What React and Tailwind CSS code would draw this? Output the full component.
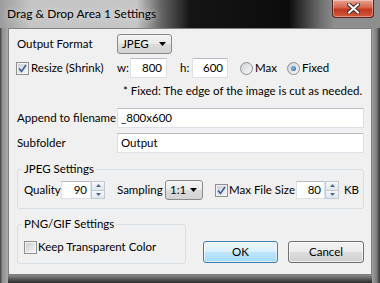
import React from "react";

const font = { fontFamily: 'Lato, "Noto Sans", sans-serif' };

const Check = ({ checked }) => (
  <span className="flex h-[13px] w-[13px] shrink-0 items-center justify-center border border-[#8e8f8f] bg-white">
    <span className="flex h-[11px] w-[11px] items-center justify-center border border-[#f4f4f4] bg-[linear-gradient(135deg,#cdd0d5,#f4f4f4)]">
      {checked ? (
        <svg width="9" height="9" viewBox="0 0 9 9">
          <path d="M1 4.5 L3.5 7.5 L8 1" fill="none" stroke="#3d5c9c" strokeWidth="1.6" />
        </svg>
      ) : null}
    </span>
  </span>
);

const Radio = ({ on }) => (
  <span className="flex h-[13px] w-[13px] shrink-0 items-center justify-center rounded-full border border-[#8e8f8f] bg-[linear-gradient(135deg,#cfd2d6,#f8f8f8)]">
    {on ? (
      <span className="h-[5px] w-[5px] rounded-full bg-[radial-gradient(circle_at_40%_40%,#8ec1f2,#1d4e97)]" />
    ) : null}
  </span>
);

const Arrow = () => (
  <svg width="7" height="4" viewBox="0 0 7 4">
    <path d="M0 0 H7 L3.5 4 Z" fill="#000" />
  </svg>
);

const Combo = ({ value, w }) => (
  <div
    className={`flex h-[20px] shrink-0 items-center justify-between rounded-[3px] border border-[#8a8a8a] bg-[linear-gradient(#f4f4f4,#e9e9e9_50%,#dcdcdc_51%,#d2d2d2)] pl-[4px] pr-[5px] ${w}`}
  >
    <span>{value}</span>
    <Arrow />
  </div>
);

const Spin = ({ value, w }) => (
  <div className="flex h-[18px] shrink-0 items-stretch">
    <div
      className={`flex items-center justify-end border border-[#dde1e7] border-t-[#b9bdc6] bg-white pr-[3px] ${w}`}
    >
      {value}
    </div>
    <div className="flex w-[14px] flex-col">
      <div className="flex flex-1 items-center justify-center border border-[#c3c9d2] bg-[linear-gradient(#f6f8fb,#dde5ee)]">
        <svg width="5" height="3" viewBox="0 0 5 3">
          <path d="M0 3 L2.5 0 L5 3 Z" fill="#51648a" />
        </svg>
      </div>
      <div className="flex flex-1 items-center justify-center border border-t-0 border-[#c3c9d2] bg-[linear-gradient(#f6f8fb,#dde5ee)]">
        <svg width="5" height="3" viewBox="0 0 5 3">
          <path d="M0 0 L2.5 3 L5 0 Z" fill="#51648a" />
        </svg>
      </div>
    </div>
  </div>
);

const Field = ({ value, className = "" }) => (
  <div
    className={`flex h-[20px] shrink-0 items-center border border-[#dde1e7] border-t-[#b9bdc6] bg-white ${className}`}
  >
    {value}
  </div>
);

const Group = ({ title, className = "", children }) => (
  <div className={`relative h-[40px] rounded-[3px] border border-[#d5dfe5] ${className}`}>
    <span className="absolute left-[4px] top-[-9px] bg-[#f0f0f0] px-[2px] leading-[16px]">
      {title}
    </span>
    {children}
  </div>
);

export default function App() {
  return (
    <div
      className="h-[283px] w-[380px] whitespace-nowrap bg-[#3a3a3a] text-[11.5px] text-black"
      style={font}
    >
      <div className="flex h-[28px] items-start justify-between bg-[linear-gradient(to_right,#9c9c9c_0%,#c4c4c4_8%,#c6c6c6_36%,#6a6a6a_42%,#151515_50%,#0c0c0c_76%,#6a6a6a_84%,#8e8e8e_88%)]">
        <span className="ml-[7px] mt-[6px] text-[12px] leading-[16px] [text-shadow:0_0_6px_#e8e8e8]">
          Drag &amp; Drop Area 1 Settings
        </span>
        <div className="mr-[6px] flex h-[18px] w-[42px] items-center justify-center rounded-b-[4px] border border-t-0 border-[#5a2320] bg-[linear-gradient(#e8a493,#d7624a_45%,#c2371f_55%,#d1593c)] shadow-[inset_0_0_0_1px_rgba(255,255,255,0.35)]">
          <svg width="13" height="11" viewBox="0 0 13 11">
            <path
              d="M2 1.5 L11 9.5 M11 1.5 L2 9.5"
              stroke="#3b2b2b"
              strokeWidth="4"
              strokeLinecap="square"
            />
            <path
              d="M2 1.5 L11 9.5 M11 1.5 L2 9.5"
              stroke="#fff"
              strokeWidth="2"
              strokeLinecap="square"
            />
          </svg>
        </div>
      </div>

      <div className="flex h-[255px]">
        <div className="w-[8px] bg-[linear-gradient(to_right,#3c3c3c,#8f8f8f_30%,#a9a9a9)]" />

        <div className="flex w-[364px] flex-col">
          <div className="h-[247px] border border-[#7d7f84] bg-[#f0f0f0] pl-[8px] pr-[7px] pt-[5px]">
            <div className="flex h-[20px] items-center">
              <span className="w-[100px]">Output Format</span>
              <Combo value="JPEG" w="w-[55px]" />
            </div>

            <div className="mt-[4px] flex h-[20px] items-center">
              <div className="flex w-[100px] shrink-0 items-center gap-[2px]">
                <span className="-ml-[1px]">
                  <Check checked />
                </span>
                <span>Resize (Shrink)</span>
              </div>
              <span className="w-[13px] shrink-0">w:</span>
              <Field value="800" className="w-[37px] justify-end pr-[4px]" />
              <span className="ml-[13px] w-[12px] shrink-0">h:</span>
              <Field value="600" className="w-[36px] justify-end pr-[4px]" />
              <span className="ml-[12px] flex w-[47px] shrink-0 items-center gap-[2px]">
                <Radio />
                <span>Max</span>
              </span>
              <span className="flex items-center gap-[2px]">
                <Radio on />
                <span>Fixed</span>
              </span>
            </div>

            <div className="mt-[5px] h-[16px] pl-[106px] leading-[16px]">
              * Fixed: The edge of the image is cut as needed.
            </div>

            <div className="mt-[9px] flex h-[20px] items-center">
              <span className="w-[100px] shrink-0">Append to filename</span>
              <Field value="_800x600" className="flex-1 pl-[3px]" />
            </div>

            <div className="mt-[5px] flex h-[20px] items-center">
              <span className="w-[100px] shrink-0">Subfolder</span>
              <Field value="Output" className="flex-1 pl-[3px]" />
            </div>

            <Group title="JPEG Settings" className="mt-[16px]">
              <div className="mt-[10px] flex h-[20px] items-center pl-[6px]">
                <span className="w-[37px] shrink-0">Quality</span>
                <Spin value="90" w="w-[30px]" />
                <span className="ml-[12px] w-[48px] shrink-0">Sampling</span>
                <Combo value="1:1" w="w-[38px]" />
                <span className="ml-[12px] flex w-[81px] shrink-0 items-center gap-[1px]">
                  <Check checked />
                  <span>Max File Size</span>
                </span>
                <Spin value="80" w="w-[29px]" />
                <span className="ml-[5px]">KB</span>
              </div>
            </Group>

            <div className="mt-[15px] flex items-end justify-between">
              <Group title="PNG/GIF Settings" className="w-[169px]">
                <div className="mt-[12px] flex h-[20px] items-center gap-[1px] pl-[6px]">
                  <Check />
                  <span>Keep Transparent Color</span>
                </div>
              </Group>
              <div className="mb-[1px] flex gap-[10px]">
                <button className="h-[22px] w-[75px] rounded-[3px] border border-[#3c7fb1] bg-[linear-gradient(#eaf6fd,#d9f0fc_50%,#bee6fd_51%,#a7d9f5)] shadow-[inset_0_0_0_1px_rgba(255,255,255,0.6)]">
                  OK
                </button>
                <button className="h-[22px] w-[76px] rounded-[3px] border border-[#707070] bg-[linear-gradient(#f2f2f2,#ebebeb_50%,#dddddd_51%,#cfcfcf)] shadow-[inset_0_0_0_1px_rgba(255,255,255,0.6)]">
                  Cancel
                </button>
              </div>
            </div>
          </div>
          <div className="h-[8px] bg-[linear-gradient(#8a8a8a,#2a2a2a)]" />
        </div>

        <div className="w-[8px] bg-[linear-gradient(to_right,#a0a0a0,#7a7a7a_60%,#333)]" />
      </div>
    </div>
  );
}
